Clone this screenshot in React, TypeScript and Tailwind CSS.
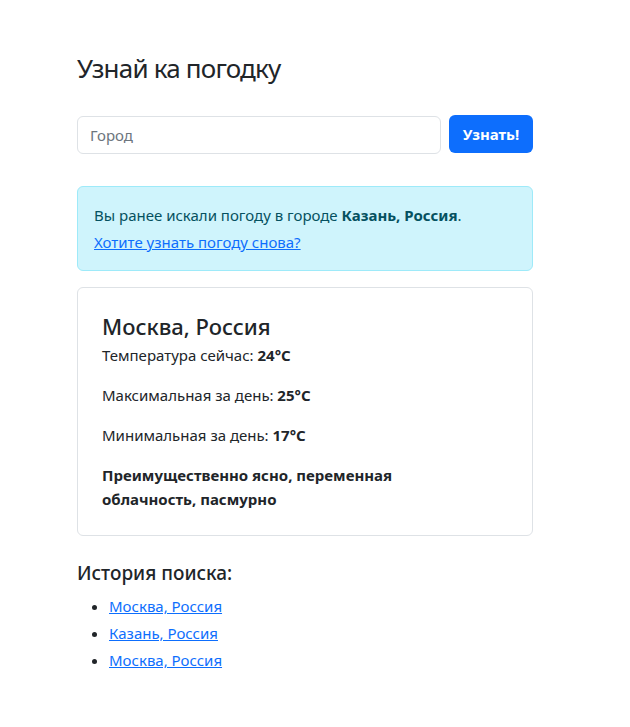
import { useState } from "react";

const history = ["Москва, Россия", "Казань, Россия", "Москва, Россия"];

export default function App() {
  const [city, setCity] = useState("");

  return (
    <div className="min-h-screen bg-white text-[#212529] font-['Noto_Sans',sans-serif] text-[15px] leading-6">
      <div className="w-[456px] ml-[77px] pt-[51px]">
        <h3 className="text-[26px] leading-[34px] font-normal tracking-[-0.8px]">Узнай ка погодку</h3>

        <form
          className="flex gap-2 mt-[30px]"
          onSubmit={(e) => e.preventDefault()}
        >
          <input
            value={city}
            onChange={(e) => setCity(e.target.value)}
            placeholder="Город"
            className="flex-1 h-[38px] mt-[1px] px-3 border border-[#dee2e6] rounded-md outline-none placeholder:text-[#6c757d] text-[15px]"
          />
          <button className="w-[84px] h-[38px] rounded-md bg-[#0d6efd] text-white font-bold text-[15px]">
            Узнать!
          </button>
        </form>

        <div className="mt-[32px] border border-[#9eeaf9] bg-[#cff4fc] text-[#055160] rounded-md px-4 pt-4 pb-4">
          <p className="mb-[3px]">
            Вы ранее искали погоду в городе <b>Казань, Россия</b>.
          </p>
          <a href="#" className="text-[#0d6efd] underline">
            Хотите узнать погоду снова?
          </a>
        </div>

        <div className="mt-[16px] border border-[#dee2e6] rounded-md p-6">
          <h4 className="text-[22px] leading-[29px] font-medium mb-[2px]">Москва, Россия</h4>
          <p className="mb-4">
            Температура сейчас: <b>24°C</b>
          </p>
          <p className="mb-4">
            Максимальная за день: <b>25°C</b>
          </p>
          <p className="mb-4">
            Минимальная за день: <b>17°C</b>
          </p>
          <p className="font-bold max-w-[300px]">
            Преимущественно ясно, переменная облачность, пасмурно
          </p>
        </div>

        <h5 className="mt-[25px] text-[19px] leading-6 font-medium">История поиска:</h5>
        <ul className="mt-[8px] pl-8 list-disc">
          {history.map((item, i) => (
            <li key={i} className="leading-[27px]">
              <a href="#" className="text-[#0d6efd] underline">
                {item}
              </a>
            </li>
          ))}
        </ul>
      </div>
    </div>
  );
}
